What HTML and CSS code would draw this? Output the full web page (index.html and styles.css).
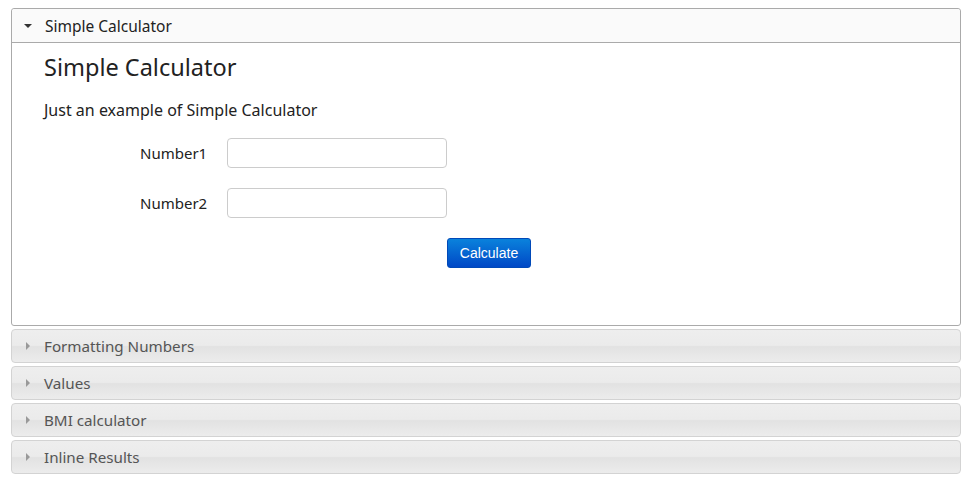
FILE: index.html
```html
<!DOCTYPE html>
<html lang="en">
<head>
    <meta charset="UTF-8">
    <title>Simple Calculator</title>
    <link rel="stylesheet" href="styles.css">
</head>
<body>
    <div class="accordion">
        <div class="section active">
            <div class="acc-header">
                <span class="icon-down"></span>
                <span>Simple Calculator</span>
            </div>
            <div class="acc-content">
                <h2>Simple Calculator</h2>
                <p>Just an example of Simple Calculator</p>
                <form class="calc-form">
                    <label for="num1">Number1</label>
                    <input type="text" id="num1">
                    <span></span>
                    <label for="num2">Number2</label>
                    <input type="text" id="num2">
                    <span></span>
                    <span></span>
                    <span></span>
                    <button type="button" class="calc-btn">Calculate</button>
                </form>
            </div>
        </div>
        <div class="acc-header closed"><span class="icon-right"></span><span>Formatting Numbers</span></div>
        <div class="acc-header closed"><span class="icon-right"></span><span>Values</span></div>
        <div class="acc-header closed"><span class="icon-right"></span><span>BMI calculator</span></div>
        <div class="acc-header closed"><span class="icon-right"></span><span>Inline Results</span></div>
    </div>
</body>
</html>
```

FILE: styles.css
```css
body {
    margin: 8px 12px 0 11px;
    font-family: "Noto Sans", "DejaVu Sans", sans-serif;
    color: #222;
    background-color: white;
}
.accordion {
    display: flex;
    flex-direction: column;
    gap: 3px;
}
.section {
    border: 1px solid #aaa;
    border-radius: 3px;
}
.acc-header {
    display: flex;
    align-items: center;
    height: 34px;
    padding-left: 12px;
    font-size: 15.5px;
    box-sizing: border-box;
}
.section .acc-header {
    background-color: #fafafa;
    border-bottom: 1px solid #aaa;
    border-radius: 3px 3px 0 0;
}
.acc-header.closed {
    height: 34px;
    border: 1px solid #d3d3d3;
    border-radius: 4px;
    color: #555;
    font-size: 15.2px;
    background: linear-gradient(to bottom, #eeeeee 0%, #ebebeb 48%, #e2e2e2 52%, #ececec 100%);
}
.icon-down {
    width: 0;
    height: 0;
    border-left: 4px solid transparent;
    border-right: 4px solid transparent;
    border-top: 4px solid #333;
    margin-right: 13px;
    margin-top: 1px;
}
.icon-right {
    width: 0;
    height: 0;
    border-top: 4px solid transparent;
    border-bottom: 4px solid transparent;
    border-left: 4px solid #999;
    margin-left: 2px;
    margin-right: 14px;
}
.acc-content {
    height: 282px;
    padding: 8px 32px 0;
    box-sizing: border-box;
}
.acc-content h2 {
    font-size: 23.5px;
    font-weight: normal;
    margin: 0 0 16px;
}
.acc-content p {
    font-size: 16px;
    margin: 0 0 17px;
}
.calc-form {
    display: grid;
    grid-template-columns: 87px 220px 84px;
    row-gap: 20px;
    margin-left: 96px;
    align-items: center;
}
.calc-form label {
    font-size: 15px;
}
.calc-form input {
    height: 30px;
    box-sizing: border-box;
    border: 1px solid #ccc;
    border-radius: 4px;
    padding: 4px 8px;
}
.calc-btn {
    height: 30px;
    border: 1px solid #0049b8;
    border-radius: 3px;
    color: white;
    font-family: "Liberation Sans", Arial, sans-serif;
    font-size: 14px;
    background: linear-gradient(to bottom, #0a82dc, #0048c6);
}
```
